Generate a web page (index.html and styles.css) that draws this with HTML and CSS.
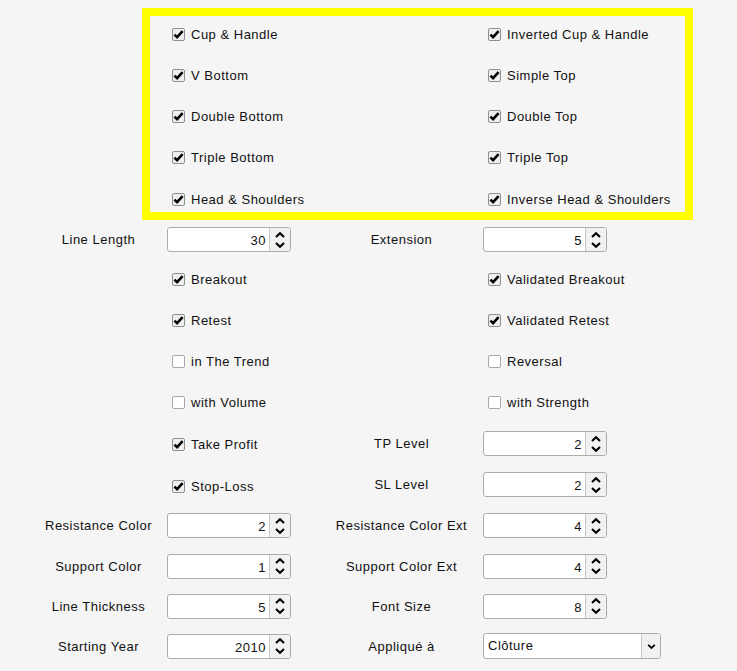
FILE: index.html
```html
<!DOCTYPE html>
<html lang="en">
<head>
<meta charset="utf-8">
<title>Pattern settings</title>
<link rel="stylesheet" href="styles.css">
</head>
<body>
<svg class="defs" width="0" height="0" aria-hidden="true">
  <defs>
    <symbol id="tick" viewBox="0 0 11 11"><path d="M1.4 5.6 L4.1 8.2 L9.6 2.2" fill="none" stroke="#000" stroke-width="2.6"/></symbol>
    <symbol id="up" viewBox="0 0 10 6"><path d="M1 5 L5 1.2 L9 5" fill="none" stroke="#000" stroke-width="2.1"/></symbol>
    <symbol id="down" viewBox="0 0 10 6"><path d="M1 1 L5 4.8 L9 1" fill="none" stroke="#000" stroke-width="2.1"/></symbol>
  </defs>
</svg>
<div class="page">
  <div class="patterns">
    <div class="check"><span class="box"><svg><use href="#tick"/></svg></span>Cup &amp; Handle</div>
    <div class="check"><span class="box"><svg><use href="#tick"/></svg></span>Inverted Cup &amp; Handle</div>
    <div class="check"><span class="box"><svg><use href="#tick"/></svg></span>V Bottom</div>
    <div class="check"><span class="box"><svg><use href="#tick"/></svg></span>Simple Top</div>
    <div class="check"><span class="box"><svg><use href="#tick"/></svg></span>Double Bottom</div>
    <div class="check"><span class="box"><svg><use href="#tick"/></svg></span>Double Top</div>
    <div class="check"><span class="box"><svg><use href="#tick"/></svg></span>Triple Bottom</div>
    <div class="check"><span class="box"><svg><use href="#tick"/></svg></span>Triple Top</div>
    <div class="check"><span class="box"><svg><use href="#tick"/></svg></span>Head &amp; Shoulders</div>
    <div class="check"><span class="box"><svg><use href="#tick"/></svg></span>Inverse Head &amp; Shoulders</div>
  </div>

  <div class="form">
    <div class="lbl">Line Length</div>
    <div class="cell"><div class="spin"><span class="val">30</span><span class="btns"><svg class="arr"><use href="#up"/></svg><svg class="arr"><use href="#down"/></svg></span></div></div>
    <div class="lbl">Extension</div>
    <div class="cell"><div class="spin"><span class="val">5</span><span class="btns"><svg class="arr"><use href="#up"/></svg><svg class="arr"><use href="#down"/></svg></span></div></div>

    <div class="lbl"></div>
    <div class="cell"><div class="check"><span class="box"><svg><use href="#tick"/></svg></span>Breakout</div></div>
    <div class="lbl"></div>
    <div class="cell"><div class="check"><span class="box"><svg><use href="#tick"/></svg></span>Validated Breakout</div></div>

    <div class="lbl"></div>
    <div class="cell"><div class="check"><span class="box"><svg><use href="#tick"/></svg></span>Retest</div></div>
    <div class="lbl"></div>
    <div class="cell"><div class="check"><span class="box"><svg><use href="#tick"/></svg></span>Validated Retest</div></div>

    <div class="lbl"></div>
    <div class="cell"><div class="check"><span class="box off"></span>in The Trend</div></div>
    <div class="lbl"></div>
    <div class="cell"><div class="check"><span class="box off"></span>Reversal</div></div>

    <div class="lbl"></div>
    <div class="cell"><div class="check"><span class="box off"></span>with Volume</div></div>
    <div class="lbl"></div>
    <div class="cell"><div class="check"><span class="box off"></span>with Strength</div></div>

    <div class="lbl"></div>
    <div class="cell"><div class="check low"><span class="box"><svg><use href="#tick"/></svg></span>Take Profit</div></div>
    <div class="lbl">TP Level</div>
    <div class="cell"><div class="spin"><span class="val">2</span><span class="btns"><svg class="arr"><use href="#up"/></svg><svg class="arr"><use href="#down"/></svg></span></div></div>

    <div class="lbl"></div>
    <div class="cell"><div class="check lower"><span class="box"><svg><use href="#tick"/></svg></span>Stop-Loss</div></div>
    <div class="lbl">SL Level</div>
    <div class="cell"><div class="spin"><span class="val">2</span><span class="btns"><svg class="arr"><use href="#up"/></svg><svg class="arr"><use href="#down"/></svg></span></div></div>

    <div class="lbl">Resistance Color</div>
    <div class="cell"><div class="spin"><span class="val">2</span><span class="btns"><svg class="arr"><use href="#up"/></svg><svg class="arr"><use href="#down"/></svg></span></div></div>
    <div class="lbl">Resistance Color Ext</div>
    <div class="cell"><div class="spin"><span class="val">4</span><span class="btns"><svg class="arr"><use href="#up"/></svg><svg class="arr"><use href="#down"/></svg></span></div></div>

    <div class="lbl">Support Color</div>
    <div class="cell"><div class="spin"><span class="val">1</span><span class="btns"><svg class="arr"><use href="#up"/></svg><svg class="arr"><use href="#down"/></svg></span></div></div>
    <div class="lbl">Support Color Ext</div>
    <div class="cell"><div class="spin"><span class="val">4</span><span class="btns"><svg class="arr"><use href="#up"/></svg><svg class="arr"><use href="#down"/></svg></span></div></div>

    <div class="lbl">Line Thickness</div>
    <div class="cell"><div class="spin"><span class="val">5</span><span class="btns"><svg class="arr"><use href="#up"/></svg><svg class="arr"><use href="#down"/></svg></span></div></div>
    <div class="lbl">Font Size</div>
    <div class="cell"><div class="spin"><span class="val">8</span><span class="btns"><svg class="arr"><use href="#up"/></svg><svg class="arr"><use href="#down"/></svg></span></div></div>

    <div class="lbl">Starting Year</div>
    <div class="cell"><div class="spin"><span class="val">2010</span><span class="btns"><svg class="arr"><use href="#up"/></svg><svg class="arr"><use href="#down"/></svg></span></div></div>
    <div class="lbl">Appliqué à</div>
    <div class="cell"><div class="combo"><span class="sel">Clôture</span><span class="drop"><svg class="arr"><use href="#down"/></svg></span></div></div>
  </div>
</div>
</body>
</html>
```

FILE: styles.css
```css
html, body {
  margin: 0;
  padding: 0;
  background: #f5f5f5;
}

body {
  font-family: "Liberation Sans", Arial, sans-serif;
  font-size: 13px;
  letter-spacing: 0.5px;
  color: #111;
  width: 737px;
  height: 671px;
  overflow: hidden;
}

.defs {
  position: absolute;
  width: 0;
  height: 0;
}

.page {
  padding-top: 8px;
}

/* yellow highlighted pattern list */
.patterns {
  box-sizing: border-box;
  margin-left: 142px;
  width: 551px;
  height: 212px;
  border: 8px solid #ffff00;
  padding: 8px 0 0 22px;
  display: grid;
  grid-template-columns: 316px auto;
  grid-auto-rows: 20px;
  row-gap: 21.25px;
}

.check {
  display: flex;
  align-items: center;
  gap: 6px;
  white-space: nowrap;
  height: 20px;
}

.check.low { position: relative; top: 1px; }
.check.lower { position: relative; top: 2px; }

.box {
  box-sizing: border-box;
  width: 13px;
  height: 13px;
  border: 1px solid #8f8f8f;
  border-radius: 2px;
  background: #efefef;
  display: flex;
  flex: none;
}

.box svg {
  width: 11px;
  height: 11px;
}

.box.off {
  background: #ffffff;
  border-color: #a8a8a8;
}

/* form grid */
.form {
  display: grid;
  padding-left: 30px;
  grid-template-columns: 137px 153px 163px auto;
  grid-template-rows: 39px repeat(7, 41px) repeat(3, 40px);
  align-items: center;
}

.lbl {
  text-align: center;
  white-space: nowrap;
}

.cell {
  display: flex;
  align-items: center;
}

.cell .check {
  padding-left: 5px;
}

.spin {
  box-sizing: border-box;
  width: 124px;
  height: 25px;
  background: #fff;
  border: 1px solid #acacac;
  border-radius: 3px;
  display: flex;
}

.val {
  flex: 1;
  text-align: right;
  padding-right: 3px;
  line-height: 23px;
  padding-top: 1px;
}

.btns {
  box-sizing: border-box;
  width: 21px;
  border-left: 1px solid #c8c8c8;
  background: #f1f1f1;
  border-radius: 0 2px 2px 0;
  display: flex;
  flex-direction: column;
  align-items: center;
  justify-content: center;
  gap: 4px;
}

.arr {
  width: 10px;
  height: 6px;
  display: block;
}

.combo {
  box-sizing: border-box;
  width: 178px;
  height: 26px;
  background: #fff;
  border: 1px solid #acacac;
  border-radius: 3px;
  display: flex;
}

.sel {
  flex: 1;
  padding-left: 4px;
  line-height: 24px;
}

.drop {
  box-sizing: border-box;
  width: 19px;
  border-left: 1px solid #c8c8c8;
  background: #f1f1f1;
  border-radius: 0 2px 2px 0;
  display: flex;
  align-items: center;
  justify-content: center;
}

.drop .arr {
  width: 9px;
  height: 5px;
}
```
